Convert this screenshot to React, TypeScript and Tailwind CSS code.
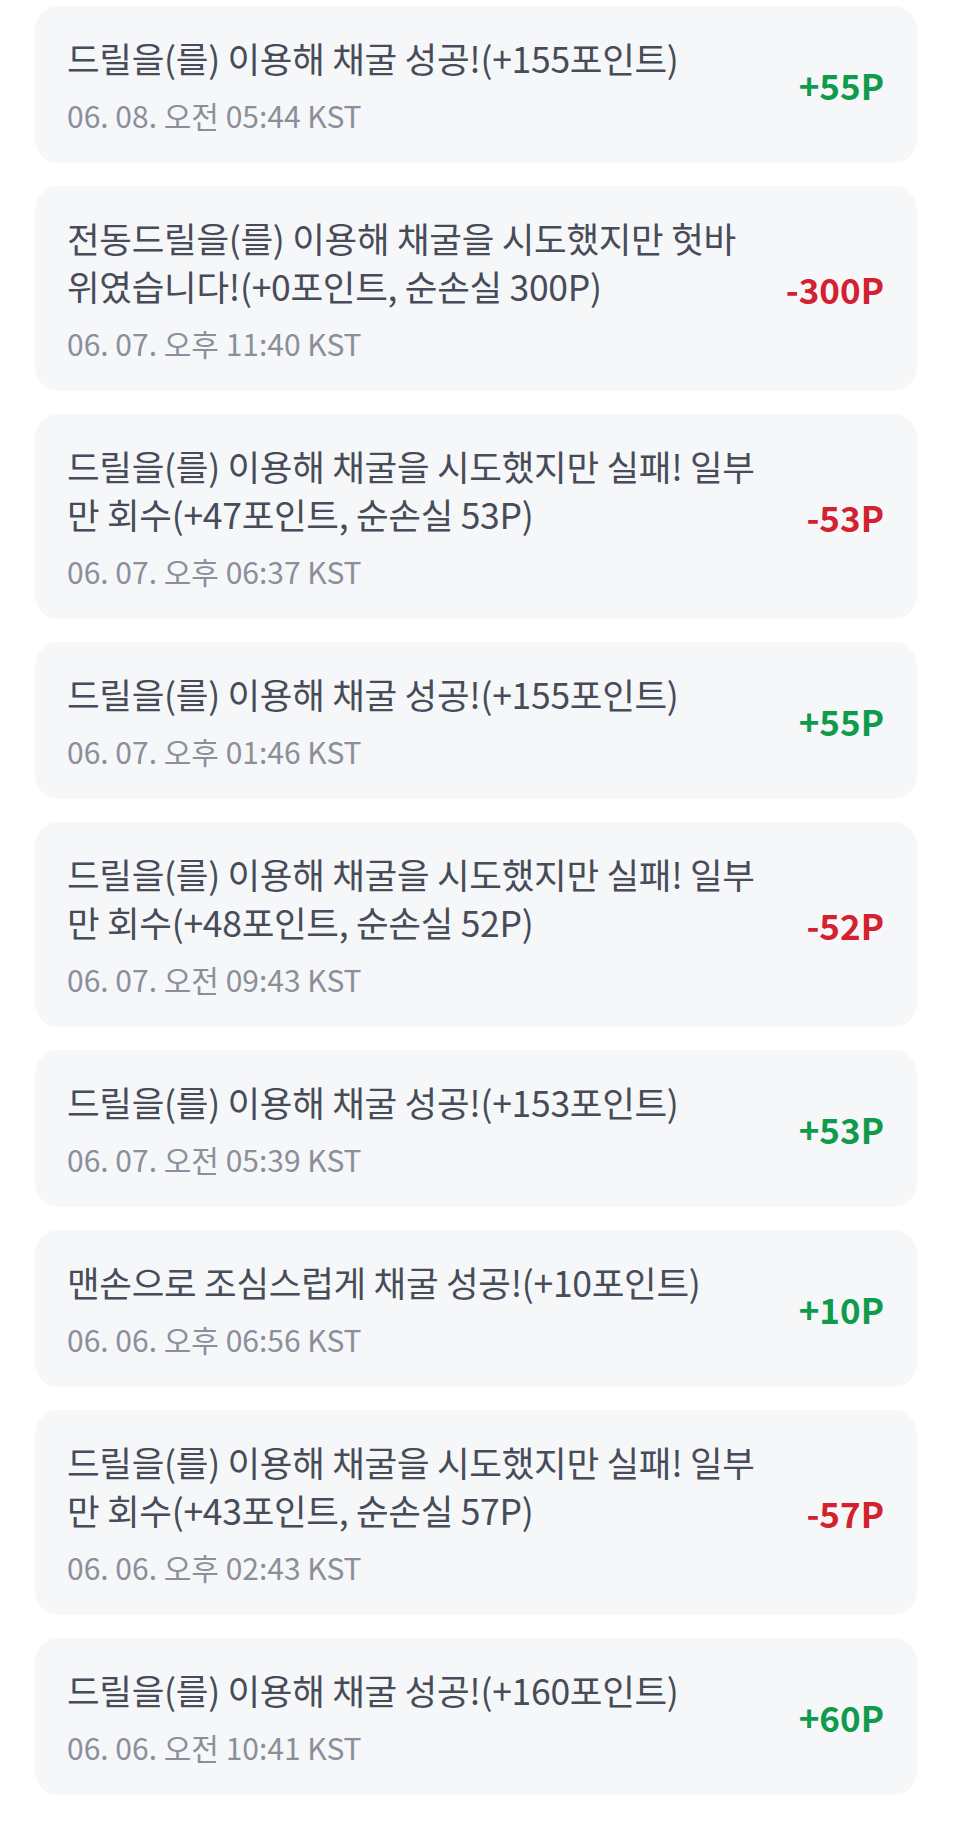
const items = [
  { lines: ['드릴을(를) 이용해 채굴 성공!(+155포인트)'], date: '06. 08. 오전 05:44 KST', amount: '+55P', gain: true },
  { lines: ['전동드릴을(를) 이용해 채굴을 시도했지만 헛바', '위였습니다!(+0포인트, 순손실 300P)'], date: '06. 07. 오후 11:40 KST', amount: '-300P', gain: false },
  { lines: ['드릴을(를) 이용해 채굴을 시도했지만 실패! 일부', '만 회수(+47포인트, 순손실 53P)'], date: '06. 07. 오후 06:37 KST', amount: '-53P', gain: false },
  { lines: ['드릴을(를) 이용해 채굴 성공!(+155포인트)'], date: '06. 07. 오후 01:46 KST', amount: '+55P', gain: true },
  { lines: ['드릴을(를) 이용해 채굴을 시도했지만 실패! 일부', '만 회수(+48포인트, 순손실 52P)'], date: '06. 07. 오전 09:43 KST', amount: '-52P', gain: false },
  { lines: ['드릴을(를) 이용해 채굴 성공!(+153포인트)'], date: '06. 07. 오전 05:39 KST', amount: '+53P', gain: true },
  { lines: ['맨손으로 조심스럽게 채굴 성공!(+10포인트)'], date: '06. 06. 오후 06:56 KST', amount: '+10P', gain: true },
  { lines: ['드릴을(를) 이용해 채굴을 시도했지만 실패! 일부', '만 회수(+43포인트, 순손실 57P)'], date: '06. 06. 오후 02:43 KST', amount: '-57P', gain: false },
  { lines: ['드릴을(를) 이용해 채굴 성공!(+160포인트)'], date: '06. 06. 오전 10:41 KST', amount: '+60P', gain: true },
];

const HistoryCard = ({ item }: { item: (typeof items)[number] }) => {
  return (
    <div className="flex items-center justify-between rounded-[24px] bg-[#f6f7f9] pl-[32px] pr-[33px] pt-[28px] pb-[28px]">
      <div className="flex flex-col">
        <p className="text-[35.5px] leading-[48px] tracking-[-0.3px] text-[#474c58]">
          {item.lines.map((line, i) => (
            <span key={i} className="block whitespace-nowrap">
              {line}
            </span>
          ))}
        </p>
        <p className="mt-[13px] text-[30px] leading-[40px] text-[#8a8f9a]">{item.date}</p>
      </div>
      <span
        className={
          item.gain
            ? 'text-[35px] font-bold leading-none text-[#0f9b4b]'
            : 'text-[35px] font-bold leading-none text-[#d3212f]'
        }
      >
        {item.amount}
      </span>
    </div>
  );
};

export default function App() {
  return (
    <div className="min-h-[1824px] w-[963px] bg-white pt-[6px] pl-[35px] pr-[46px] font-['Noto_Sans_CJK_KR','Noto_Sans',sans-serif]">
      <div className="flex flex-col gap-[23px]">
        {items.map((item, i) => (
          <HistoryCard key={i} item={item} />
        ))}
      </div>
    </div>
  );
}
